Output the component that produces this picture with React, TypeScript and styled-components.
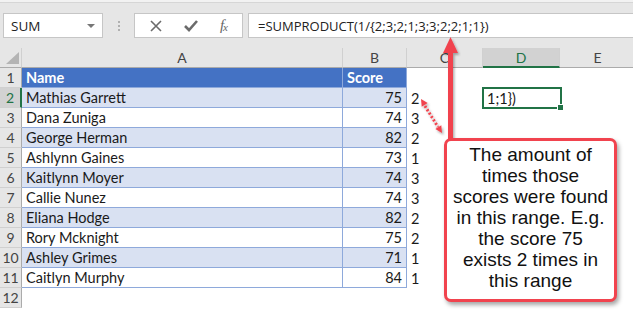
import styled, { createGlobalStyle } from 'styled-components'

const colors = {
  chrome: '#e6e6e6',
  chromeLine: '#c6c6c6',
  headLine: '#d0d0d0',
  selectedHead: '#d2d2d2',
  blue: '#4472c4',
  band: '#d9e1f2',
  tableLine: '#8ea9db',
  green: '#217346',
  red: '#f1434e',
  ink: '#1a1a1a',
  muted: '#444',
};

const GlobalStyle = createGlobalStyle`
  html, body {
    margin: 0;
    padding: 0;
    background: #fff;
    overflow: hidden;
  }
  * { box-sizing: border-box; }
`;

const Page = styled.div`
  position: relative;
  width: 633px;
  height: 310px;
  overflow: hidden;
  display: flex;
  flex-direction: column;
  background: #fff;
  font-family: Lato, 'Open Sans', sans-serif;
`;

const Toolbar = styled.div`
  height: 48px;
  flex: none;
  display: flex;
  align-items: flex-start;
  padding: 11px 0 0 3px;
  background: ${colors.chrome};
  border-top: 2px solid #f2f2f2;
  box-shadow: inset 0 1px 0 #d6d6d6;
`;

const NameBox = styled.div`
  width: 100px;
  height: 25px;
  display: flex;
  align-items: center;
  justify-content: space-between;
  padding: 0 7px 0 7px;
  background: #fff;
  border: 1px solid ${colors.chromeLine};
  font-family: 'Open Sans', sans-serif;
  font-size: 13.5px;
  color: #222;
`;

const DropArrow = styled.span`
  width: 0;
  height: 0;
  border-left: 4px solid transparent;
  border-right: 4px solid transparent;
  border-top: 4px solid #777;
`;

const Grip = styled.div`
  width: 31px;
  height: 25px;
  display: flex;
  flex-direction: column;
  align-items: center;
  justify-content: center;
  gap: 2px;

  span {
    width: 2px;
    height: 2px;
    background: #b0b0b0;
  }
`;

const ButtonBox = styled.div`
  width: 109px;
  height: 25px;
  display: flex;
  align-items: center;
  justify-content: space-around;
  padding: 0 4px;
  background: #fff;
  border: 1px solid ${colors.chromeLine};
  margin-right: 5px;
`;

const FxLabel = styled.span`
  font-family: 'Liberation Serif', serif;
  font-style: italic;
  font-size: 15px;
  color: #666;
  letter-spacing: -1px;

  sub {
    font-size: 11px;
    vertical-align: -1px;
  }
`;

const FormulaBar = styled.div`
  flex: 1;
  height: 25px;
  display: flex;
  align-items: center;
  padding-left: 9px;
  background: #fff;
  border: 1px solid ${colors.chromeLine};
  border-right: none;
  font-family: 'Open Sans', sans-serif;
  font-size: 13px;
  color: #222;
  white-space: nowrap;
`;

const Sheet = styled.div`
  display: grid;
  grid-template-columns: 22px 321px 64px 76px 77px 76px;
  grid-auto-rows: 20px;
`;

const Corner = styled.div`
  background: ${colors.chrome};
  border-right: 1px solid ${colors.headLine};
  border-bottom: 1px solid #ababab;
  display: flex;
  align-items: flex-end;
  justify-content: flex-end;
  padding: 0 2px 3px 0;
`;

const ColHead = styled.div<{ $selected?: boolean }>`
  display: flex;
  align-items: center;
  justify-content: center;
  font-size: 14px;
  background: ${(p) => (p.$selected ? colors.selectedHead : colors.chrome)};
  color: ${(p) => (p.$selected ? colors.green : colors.muted)};
  border-right: 1px solid ${colors.headLine};
  border-bottom: ${(p) => (p.$selected ? `2px solid ${colors.green}` : '1px solid #ababab')};
`;

const RowHead = styled.div<{ $selected?: boolean }>`
  display: flex;
  align-items: center;
  justify-content: center;
  font-size: 14px;
  background: ${(p) => (p.$selected ? colors.selectedHead : colors.chrome)};
  color: ${(p) => (p.$selected ? colors.green : colors.muted)};
  border-bottom: 1px solid ${colors.headLine};
  border-right: ${(p) => (p.$selected ? `2px solid ${colors.green}` : '1px solid #ababab')};
`;

type Tone = 'head' | 'band' | 'plain' | 'blank';

const Cell = styled.div<{ $tone: Tone; $right?: boolean; $edge?: boolean }>`
  display: flex;
  align-items: center;
  justify-content: ${(p) => (p.$right ? 'flex-end' : 'flex-start')};
  padding: 0 4px;
  font-size: 14.5px;
  white-space: nowrap;
  color: ${(p) => (p.$tone === 'head' ? '#fff' : colors.ink)};
  font-weight: ${(p) => (p.$tone === 'head' ? 700 : 400)};
  background: ${(p) =>
    p.$tone === 'head' ? colors.blue : p.$tone === 'band' ? colors.band : '#fff'};
  border-bottom: ${(p) => (p.$tone === 'blank' ? 'none' : `1px solid ${colors.tableLine}`)};
  border-right: ${(p) => (p.$edge ? `1px solid ${colors.tableLine}` : 'none')};
`;

const ActiveCell = styled(Cell)`
  position: relative;

  &::after {
    content: '';
    position: absolute;
    inset: -1px -2px -1px -1px;
    border: 2px solid ${colors.green};
  }

  &::before {
    content: '';
    position: absolute;
    right: -4px;
    bottom: -3px;
    width: 5px;
    height: 5px;
    background: ${colors.green};
    border: 1px solid #fff;
    z-index: 1;
  }
`;

const Overlay = styled.svg`
  position: absolute;
  left: 0;
  top: 0;
  width: 633px;
  height: 310px;
  pointer-events: none;
`;

const Callout = styled.div`
  position: absolute;
  left: 444px;
  top: 138px;
  width: 173px;
  height: 164px;
  padding-top: 3px;
  background: #fff;
  border: 3px solid ${colors.red};
  border-radius: 7px;
  box-shadow: 2px 3px 4px rgba(0, 0, 0, 0.35);
  font-family: 'Liberation Sans', Arial, sans-serif;
  font-size: 19px;
  line-height: 21px;
  color: #111;
  text-align: center;
`;

const rows: [string, number, number][] = [
  ['Mathias Garrett', 75, 2],
  ['Dana Zuniga', 74, 3],
  ['George Herman', 82, 2],
  ['Ashlynn Gaines', 73, 1],
  ['Kaitlynn Moyer', 74, 3],
  ['Callie Nunez', 74, 3],
  ['Eliana Hodge', 82, 2],
  ['Rory Mcknight', 75, 2],
  ['Ashley Grimes', 71, 1],
  ['Caitlyn Murphy', 84, 1],
];

function App() {
  return (
    <Page>
      <GlobalStyle />
      <Toolbar>
        <NameBox>
          SUM
          <DropArrow />
        </NameBox>
        <Grip>
          <span />
          <span />
          <span />
        </Grip>
        <ButtonBox>
          <svg width="12" height="12" viewBox="0 0 12 12">
            <path d="M1 1 L11 11 M11 1 L1 11" stroke="#6b6b6b" strokeWidth="1.6" />
          </svg>
          <svg width="14" height="12" viewBox="0 0 14 12">
            <path d="M1 6 L5 10 L13 1" stroke="#6b6b6b" strokeWidth="2.6" fill="none" />
          </svg>
          <FxLabel>
            f<sub>x</sub>
          </FxLabel>
        </ButtonBox>
        <FormulaBar>=SUMPRODUCT(1/{'{'}2;3;2;1;3;3;2;2;1;1{'}'})</FormulaBar>
      </Toolbar>

      <Sheet>
        <Corner>
          <svg width="13" height="12" viewBox="0 0 13 12">
            <path d="M13 0 L13 12 L0 12 Z" fill="#b4b4b4" />
          </svg>
        </Corner>
        <ColHead>A</ColHead>
        <ColHead>B</ColHead>
        <ColHead>C</ColHead>
        <ColHead $selected>D</ColHead>
        <ColHead>E</ColHead>

        <RowHead>1</RowHead>
        <Cell $tone="head" $edge>Name</Cell>
        <Cell $tone="head" $edge>Score</Cell>
        <Cell $tone="blank" />
        <Cell $tone="blank" />
        <Cell $tone="blank" />

        {rows.map(([name, score, count], i) => {
          const tone: Tone = i % 2 === 0 ? 'band' : 'plain';
          return [
            <RowHead key={`h${i}`} $selected={i === 0}>
              {i + 2}
            </RowHead>,
            <Cell key={`a${i}`} $tone={tone} $edge>
              {name}
            </Cell>,
            <Cell key={`b${i}`} $tone={tone} $edge $right>
              {score}
            </Cell>,
            <Cell key={`c${i}`} $tone="blank">
              {count}
            </Cell>,
            i === 0 ? (
              <ActiveCell key={`d${i}`} $tone="blank">
                1;1{'}'})
              </ActiveCell>
            ) : (
              <Cell key={`d${i}`} $tone="blank" />
            ),
            <Cell key={`e${i}`} $tone="blank" />,
          ];
        })}

        <RowHead>12</RowHead>
        <Cell $tone="blank" />
        <Cell $tone="blank" />
        <Cell $tone="blank" />
        <Cell $tone="blank" />
        <Cell $tone="blank" />
      </Sheet>

      <Overlay viewBox="0 0 633 310">
        <defs>
          <filter id="soft" x="-20%" y="-20%" width="140%" height="140%">
            <feDropShadow dx="1.5" dy="2" stdDeviation="1.2" floodColor="#000" floodOpacity="0.3" />
          </filter>
        </defs>
        <g filter="url(#soft)" fill={colors.red}>
          <rect x="448" y="50" width="5" height="92" />
          <polygon points="450.5,37 443,53 458,53" />
        </g>
        <g filter="url(#soft)" fill={colors.red}>
          <line
            x1="425"
            y1="106"
            x2="438"
            y2="127"
            stroke={colors.red}
            strokeWidth="3"
            strokeDasharray="2 2"
          />
          <polygon points="421,99 421.7,106.8 427.7,103.1" />
          <polygon points="442,133 435.3,128.9 441.3,125.2" />
        </g>
      </Overlay>

      <Callout>
        The amount of
        <br />
        times those
        <br />
        scores were found
        <br />
        in this range. E.g.
        <br />
        the score 75
        <br />
        exists 2 times in
        <br />
        this range
      </Callout>
    </Page>
  );
}

export default App
